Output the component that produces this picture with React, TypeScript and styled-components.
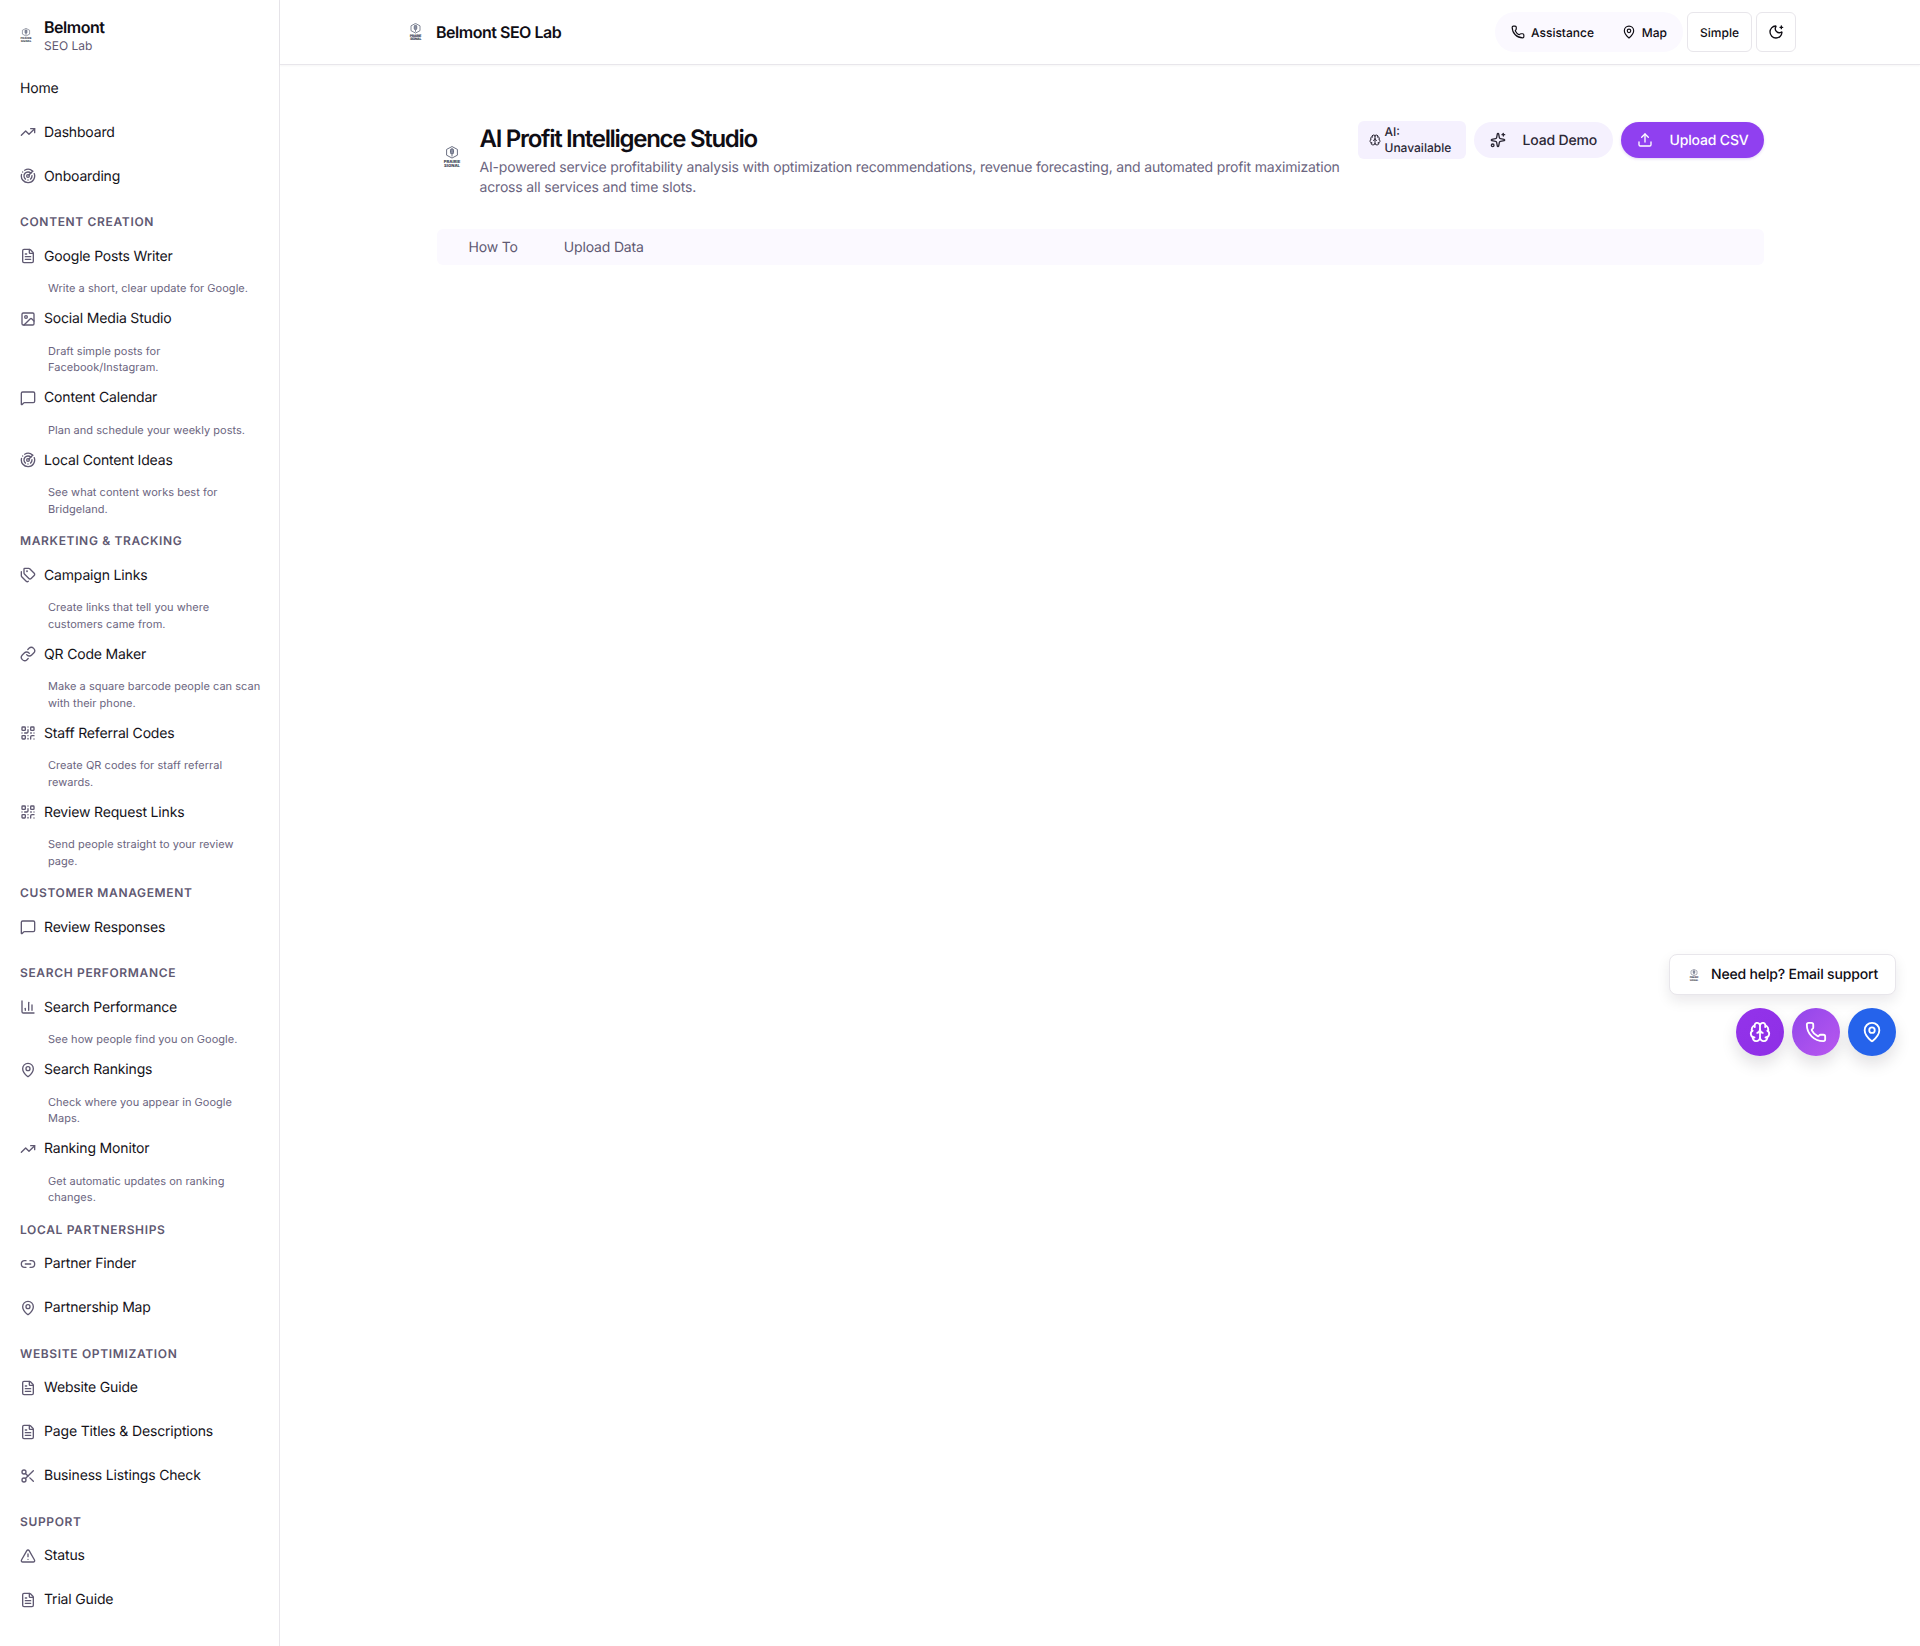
import React from "react";
import styled, { createGlobalStyle } from "styled-components";
import {
  TrendingUp, Radar, FileText, Image as ImageIcon, MessageSquare, Tags, Link as LinkIcon, QrCode,
  ChartColumn, MapPin, Link2, Scissors, TriangleAlert, Phone, MoonStar, Brain, Sparkles, Upload, LucideIcon,
} from "lucide-react";

const Global = createGlobalStyle`
  html, body { margin: 0; padding: 0; background: #fff; }
  body {
    font-family: Inter, "Liberation Sans", sans-serif;
    color: #0f0d14;
    text-rendering: geometricPrecision;
  }
  * { box-sizing: border-box; }
`;

const Shell = styled.div`
  display: flex;
  height: 1646px;
  overflow: hidden;
  position: relative;
`;
const Sidebar = styled.aside`
  width: 280px;
  flex: none;
  border-right: 1px solid #e8e6eb;
  padding: 0 16px 0 20px;
`;
const Brand = styled.div`
  height: 66px;
  display: flex;
  align-items: center;
  gap: 8px;
  padding-top: 3px;
`;
const BrandMark = styled.div`
  width: 16px;
  flex: none;
  display: flex;
  padding-top: 2px;
`;
const BrandText = styled.div`
  display: flex;
  flex-direction: column;
`;
const BrandName = styled.span`
  font-size: 16px;
  line-height: 22px;
  font-weight: 600;
  letter-spacing: -0.03em;
`;
const BrandSub = styled.span`
  font-size: 12px;
  line-height: 16px;
  color: #5f5972;
`;
const SectionLabel = styled.div`
  padding: 17px 0 5px;
  font-size: 12px;
  line-height: 14px;
  font-weight: 600;
  letter-spacing: 0.65px;
  text-transform: uppercase;
  color: #5f5972;
`;
const Item = styled.div``;
const ItemRow = styled.div`
  height: 44px;
  display: flex;
  align-items: center;
  gap: 8px;
  font-size: 14px;
  letter-spacing: -0.012em;
  color: #15131a;
  svg { color: #5f5972; flex: none; }
`;
const ItemDesc = styled.p`
  margin: 0;
  padding: 2px 0 0 28px;
  font-size: 11px;
  line-height: 16.5px;
  letter-spacing: 0.03px;
  color: #6b6580;
`;
const Main = styled.main`
  flex: 1;
  min-width: 0;
`;
const TopBar = styled.header`
  height: 65px;
  border-bottom: 1px solid #e8e6eb;
  box-shadow: 0 1px 2px rgba(20, 15, 30, 0.04);
  display: flex;
  justify-content: center;
  align-items: center;
`;
const TopInner = styled.div`
  width: 1392px;
  display: flex;
  align-items: center;
  justify-content: space-between;
`;
const TopBrand = styled.div`
  display: flex;
  align-items: center;
  gap: 13px;
  font-size: 16px;
  font-weight: 600;
  letter-spacing: -0.03em;
  padding-left: 4px;
`;
const TopActions = styled.div`
  display: flex;
  align-items: center;
  gap: 4px;
`;
const PillGroup = styled.div`
  height: 40px;
  width: 188px;
  padding: 0 16px;
  border-radius: 20px;
  background: #fbf9ff;
  display: flex;
  align-items: center;
  justify-content: space-between;
`;
const PillLink = styled.span`
  display: flex;
  align-items: center;
  gap: 6px;
  font-size: 12px;
  font-weight: 500;
  svg { flex: none; }
`;
const OutlineButton = styled.button`
  height: 40px;
  width: ${(p: { $w: number }) => p.$w}px;
  padding: 0;
  border: 1px solid #e8e6eb;
  border-radius: 6px;
  background: #fff;
  color: #0f0d14;
  font: 500 12px Inter, sans-serif;
  text-rendering: geometricPrecision;
  display: flex;
  align-items: center;
  justify-content: center;
`;
const Content = styled.div`
  width: 1327px;
  margin: 0 auto;
  padding-top: 56px;
`;
const PageHead = styled.div`
  display: flex;
  align-items: flex-start;
  gap: 16px;
`;
const HeadLogo = styled.div`
  flex: none;
  width: 27px;
  padding: 25px 0 0 6px;
`;
const HeadText = styled.div`
  flex: 1;
  min-width: 0;
  padding-top: 2px;
`;
const Title = styled.h1`
  margin: 0;
  font-size: 24px;
  line-height: 32px;
  font-weight: 600;
  letter-spacing: -0.054em;
`;
const Subtitle = styled.p`
  margin: 3px 0 0;
  font-size: 14px;
  line-height: 20px;
  letter-spacing: -0.012em;
  color: #6b6580;
`;
const HeadActions = styled.div`
  flex: none;
  display: flex;
  align-items: center;
  gap: 8px;
`;
const AiBadge = styled.div`
  width: 108px;
  height: 38px;
  padding: 0 11px;
  border-radius: 6px;
  background: #f5f1fe;
  color: #2b2735;
  display: flex;
  align-items: center;
  gap: 4px;
  font-size: 12px;
  line-height: 16px;
  font-weight: 500;
  svg { flex: none; }
`;
const RoundButton = styled.button`
  height: 36px;
  width: ${(p: { $w: number; $primary?: boolean }) => p.$w}px;
  padding: 0 0 0 16px;
  border: 0;
  border-radius: 18px;
  background: ${(p) => (p.$primary ? "#9040f0" : "#f5f1fe")};
  color: ${(p) => (p.$primary ? "#fff" : "#2b2735")};
  box-shadow: ${(p) => (p.$primary ? "0 1px 3px rgba(100,40,200,.2)" : "none")};
  font: 500 14px Inter, sans-serif;
  letter-spacing: -0.012em;
  text-rendering: geometricPrecision;
  white-space: nowrap;
  display: flex;
  align-items: center;
  gap: 17px;
  svg { flex: none; }
`;
const Tabs = styled.div`
  margin-top: 31px;
  height: 36px;
  border-radius: 6px;
  background: #fbf9ff;
  display: flex;
  align-items: center;
  gap: 46px;
  padding-left: 32px;
  font-size: 14px;
  letter-spacing: -0.012em;
  color: #5f5972;
`;
const Floating = styled.div`
  position: absolute;
  right: 24px;
  top: 954px;
  display: flex;
  flex-direction: column;
  align-items: flex-end;
  gap: 13px;
`;
const HelpCard = styled.div`
  width: 227px;
  height: 41px;
  border: 1px solid #e8e6eb;
  border-radius: 8px;
  background: #fff;
  box-shadow: 0 6px 14px rgba(20, 15, 30, 0.09);
  display: flex;
  align-items: center;
  gap: 12px;
  padding-left: 19px;
  font-size: 14px;
  font-weight: 500;
  letter-spacing: -0.012em;
`;
const FabRow = styled.div`
  display: flex;
  gap: 8px;
`;
const Fab = styled.div`
  width: 48px;
  height: 48px;
  border-radius: 50%;
  background: ${(p: { $bg: string }) => p.$bg};
  color: #fff;
  display: flex;
  align-items: center;
  justify-content: center;
  box-shadow: 0 8px 16px rgba(20, 15, 30, 0.13);
`;

const Logo = ({ width }: { width: number }) => (
  <svg width={width} height={width * 1.2} viewBox="0 0 20 24" fill="none" stroke="#5a6074" strokeWidth="1">
    <path d="M10 .6l6 3.200v6.400l-6 3.200-6-3.200V3.800z" />
    <rect x="8.300" y="3" width="3.400" height="6" rx="1.700" fill="#8a90a3" />
    <path d="M10 9.500v2.200" />
    <text x="10" y="18.500" textAnchor="middle" fontSize="4.700" fontWeight="800" fill="#3a3f52" stroke="none" fontFamily="Inter, sans-serif">PRAIRIE</text>
    <text x="10" y="23" textAnchor="middle" fontSize="4.700" fontWeight="800" fill="#3a3f52" stroke="none" fontFamily="Inter, sans-serif">SIGNAL</text>
  </svg>
);

type NavItem = { label: string; icon?: LucideIcon; desc?: string };
type NavGroup = { title?: string; items: NavItem[] };

const groups: NavGroup[] = [
  { items: [{ label: "Home" }, { label: "Dashboard", icon: TrendingUp }, { label: "Onboarding", icon: Radar }] },
  {
    title: "Content Creation",
    items: [
      { label: "Google Posts Writer", icon: FileText, desc: "Write a short, clear update for Google." },
      { label: "Social Media Studio", icon: ImageIcon, desc: "Draft simple posts for Facebook/Instagram." },
      { label: "Content Calendar", icon: MessageSquare, desc: "Plan and schedule your weekly posts." },
      { label: "Local Content Ideas", icon: Radar, desc: "See what content works best for Bridgeland." },
    ],
  },
  {
    title: "Marketing & Tracking",
    items: [
      { label: "Campaign Links", icon: Tags, desc: "Create links that tell you where customers came from." },
      { label: "QR Code Maker", icon: LinkIcon, desc: "Make a square barcode people can scan with their phone." },
      { label: "Staff Referral Codes", icon: QrCode, desc: "Create QR codes for staff referral rewards." },
      { label: "Review Request Links", icon: QrCode, desc: "Send people straight to your review page." },
    ],
  },
  { title: "Customer Management", items: [{ label: "Review Responses", icon: MessageSquare }] },
  {
    title: "Search Performance",
    items: [
      { label: "Search Performance", icon: ChartColumn, desc: "See how people find you on Google." },
      { label: "Search Rankings", icon: MapPin, desc: "Check where you appear in Google Maps." },
      { label: "Ranking Monitor", icon: TrendingUp, desc: "Get automatic updates on ranking changes." },
    ],
  },
  {
    title: "Local Partnerships",
    items: [{ label: "Partner Finder", icon: Link2 }, { label: "Partnership Map", icon: MapPin }],
  },
  {
    title: "Website Optimization",
    items: [
      { label: "Website Guide", icon: FileText },
      { label: "Page Titles & Descriptions", icon: FileText },
      { label: "Business Listings Check", icon: Scissors },
    ],
  },
  { title: "Support", items: [{ label: "Status", icon: TriangleAlert }, { label: "Trial Guide", icon: FileText }] },
];

export default function App() {
  return (
    <Shell>
      <Global />
      <Sidebar>
        <Brand>
          <BrandMark><Logo width={12} /></BrandMark>
          <BrandText>
            <BrandName>Belmont</BrandName>
            <BrandSub>SEO Lab</BrandSub>
          </BrandText>
        </Brand>
        {groups.map((g, i) => (
          <section key={i}>
            {g.title && <SectionLabel>{g.title}</SectionLabel>}
            {g.items.map((it) => (
              <Item key={it.label}>
                <ItemRow>
                  {it.icon && <it.icon size={16} strokeWidth={2} />}
                  {it.label}
                </ItemRow>
                {it.desc && <ItemDesc>{it.desc}</ItemDesc>}
              </Item>
            ))}
          </section>
        ))}
      </Sidebar>
      <Main>
        <TopBar>
          <TopInner>
            <TopBrand>
              <Logo width={15} />
              Belmont SEO Lab
            </TopBrand>
            <TopActions>
              <PillGroup>
                <PillLink><Phone size={14} strokeWidth={2} />Assistance</PillLink>
                <PillLink><MapPin size={14} strokeWidth={2} />Map</PillLink>
              </PillGroup>
              <OutlineButton $w={65}>Simple</OutlineButton>
              <OutlineButton $w={40}><MoonStar size={16} strokeWidth={2} /></OutlineButton>
            </TopActions>
          </TopInner>
        </TopBar>
        <Content>
          <PageHead>
            <HeadLogo><Logo width={18} /></HeadLogo>
            <HeadText>
              <Title>AI Profit Intelligence Studio</Title>
              <Subtitle>
                AI-powered service profitability analysis with optimization recommendations, revenue forecasting, and
                automated profit maximization across all services and time slots.
              </Subtitle>
            </HeadText>
            <HeadActions>
              <AiBadge><Brain size={12} strokeWidth={2} /><span>AI: Unavailable</span></AiBadge>
              <RoundButton $w={139}><Sparkles size={16} strokeWidth={2} />Load Demo</RoundButton>
              <RoundButton $w={143} $primary><Upload size={16} strokeWidth={2} />Upload CSV</RoundButton>
            </HeadActions>
          </PageHead>
          <Tabs>
            <span>How To</span>
            <span>Upload Data</span>
          </Tabs>
        </Content>
      </Main>
      <Floating>
        <HelpCard><Logo width={10} />Need help? Email support</HelpCard>
        <FabRow>
          <Fab $bg="linear-gradient(135deg,#9333ea,#8f2fe6)"><Brain size={22} strokeWidth={2} /></Fab>
          <Fab $bg="linear-gradient(135deg,#9146ea,#b958ef)"><Phone size={22} strokeWidth={2} /></Fab>
          <Fab $bg="#2563eb"><MapPin size={22} strokeWidth={2} /></Fab>
        </FabRow>
      </Floating>
    </Shell>
  );
}
